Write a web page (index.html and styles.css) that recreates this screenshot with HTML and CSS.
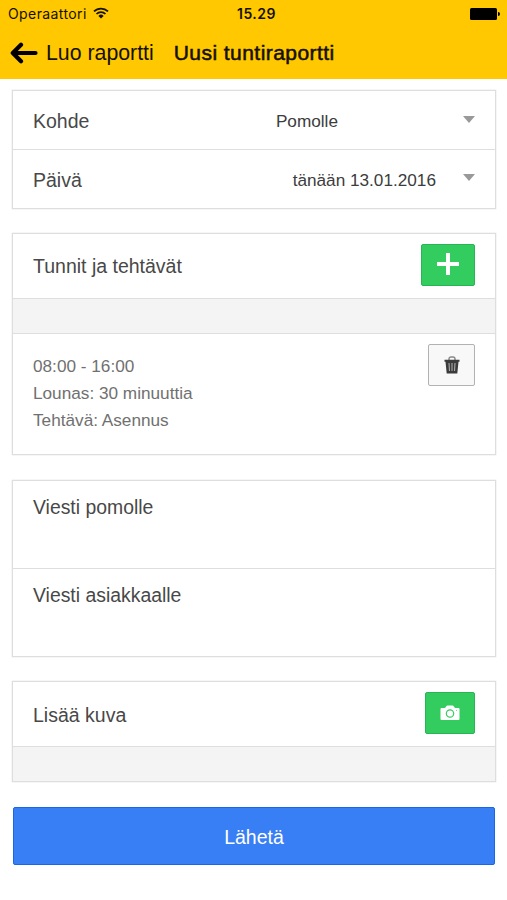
FILE: index.html
```html
<!DOCTYPE html>
<html lang="fi">
<head>
<meta charset="utf-8">
<meta name="viewport" content="width=device-width, initial-scale=1">
<title>Uusi tuntiraportti</title>
<link rel="stylesheet" href="styles.css">
</head>
<body>
<header class="top">
  <div class="status">
    <div class="carrier"><span>Operaattori</span>
      <svg class="wifi" width="16" height="12" viewBox="0 0 16 12" fill="none" stroke="#151000" stroke-width="1.7"><path d="M1 4.4a10 10 0 0 1 14 0M3.500 7a6.400 6.400 0 0 1 9 0"/><path d="M5.400 8.900a3.700 3.700 0 0 1 5.200 0L8 11.500z" fill="#151000" stroke="none"/></svg>
    </div>
    <div class="clock">15.29</div>
    <svg class="battery" width="30" height="12" viewBox="0 0 30 12"><rect width="27" height="12" rx="1.5"/><path d="M28 4a2 2 0 0 1 0 4z"/></svg>
  </div>
  <nav class="nav">
    <svg class="back" width="28" height="22" viewBox="0 0 28 22" fill="none" stroke="#000" stroke-width="4.2" stroke-linecap="round" stroke-linejoin="round"><path d="M25.500 11H3M11 2.800 2.800 11l8.200 8.200"/></svg>
    <a class="parent">Luo raportti</a>
    <h1 class="title">Uusi tuntiraportti</h1>
  </nav>
</header>
<main class="form">
  <section class="card">
    <div class="row select"><span>Kohde</span><span class="value target">Pomolle</span><i class="caret"></i></div>
    <div class="row select"><span>Päivä</span><span class="value date">tänään 13.01.2016</span><i class="caret"></i></div>
  </section>
  <section class="card">
    <div class="row action"><span>Tunnit ja tehtävät</span>
      <button class="btn add" aria-label="Lisää"><svg width="24" height="24" viewBox="0 0 24 24" stroke="#fff" stroke-width="4"><path d="M12 0v22M1 11h22"/></svg></button>
    </div>
    <div class="divider"></div>
    <div class="entry">
      <div class="details"><div>08:00 - 16:00</div><div>Lounas: 30 minuuttia</div><div>Tehtävä: Asennus</div></div>
      <button class="btn trash" aria-label="Poista"><svg width="16" height="18" viewBox="0 0 16 18" fill="none"><path d="M5 4V3a2 2 0 0 1 2-2h2a2 2 0 0 1 2 2v1" stroke="#888" stroke-width="1.4"/><path d="M.5 3.700h15v2h-1L13.300 17.500H2.700L1.500 5.700H.5z" fill="#3b3b3b"/><path d="M5 7l.5 8M8 7v8M11 7l-.5 8" stroke="#aaa" stroke-width="1.100"/></svg></button>
    </div>
  </section>
  <section class="card">
    <div class="message">Viesti pomolle</div>
    <div class="message">Viesti asiakkaalle</div>
  </section>
  <section class="card">
    <div class="row action photo"><span>Lisää kuva</span>
      <button class="btn camera" aria-label="Kamera"><svg width="20" height="16" viewBox="0 0 20 16"><path d="M1.500 3H5l1.500-2q.4-.5 1-.5h5q.6 0 1 .5L15 3h3.500Q19.500 3 19.500 4v10q0 1-1 1h-17q-1 0-1-1V4q0-1 1-1z" fill="#fff"/><circle cx="10" cy="8.500" r="3.700" fill="none" stroke="#35cd61" stroke-width="1.200"/><circle cx="16.500" cy="5.200" r=".5" fill="#35cd61"/></svg></button>
    </div>
    <div class="divider"></div>
  </section>
  <button class="submit">Lähetä</button>
</main>
</body>
</html>
```
FILE: styles.css
```css
* { box-sizing: border-box; }
body { margin: 0; background: #fff; color: #484848; font: 19.5px/24px "Liberation Sans", Arial, sans-serif; }
button { font: inherit; padding: 0; }
svg { display: block; flex: none; }
.top { height: 79px; background: #ffc800; color: #151000; }
.status { height: 27px; padding: 0 7px 0 8px; display: grid; grid-template-columns: 1fr auto 1fr; align-items: center; font: 14px/27px Inter, sans-serif; }
.carrier { display: flex; align-items: center; gap: 6px; letter-spacing: .4px; }
.wifi { margin-top: -2px; }
.clock { font-weight: 600; letter-spacing: .5px; padding-left: 5px; }
.battery { justify-self: end; fill: #000; }
.nav { height: 52px; display: flex; align-items: center; padding-left: 10px; font-size: 21.3px; }
.parent { margin-left: 8px; }
.title { margin: 0 0 0 20px; font-size: 21px; font-weight: 400; letter-spacing: .45px; -webkit-text-stroke: .55px #151000; }
.form { padding: 11px 11px 0 12px; display: flex; flex-direction: column; gap: 24px; }
.card { border: 1px solid #dedede; box-shadow: 0 0 0 .4px #e8e8e8; }
.row { display: flex; align-items: center; justify-content: space-between; padding: 0 20px; }
.select { height: 58px; padding-top: 2px; }
.select + .select { height: 59px; padding-top: 1px; border-top: 1px solid #dedede; }
.select .value { margin-left: auto; font-size: 17.2px; color: #3c3c3c; }
.target { margin-right: 125px; }
.date { margin-right: 27px; }
.caret { border: 6px solid transparent; border-top: 7px solid #999; border-bottom: 0; margin-top: -4px; }
.action { height: 64px; }
.photo > span { padding-top: 2px; }
.btn { display: flex; align-items: center; justify-content: center; height: 42px; border: 1px solid #2bb455; border-radius: 2px; background: #33cd5f; }
.add { width: 54px; margin-top: -2px; }
.camera { width: 50px; margin-top: -2px; }
.trash { width: 47px; background: #f8f8f8; border-color: #b2b2b2; }
.divider { height: 35px; background: #f4f4f4; border-top: 1px solid #dedede; }
.entry { height: 121px; border-top: 1px solid #dedede; padding: 10px 20px 0; display: flex; justify-content: space-between; }
.details { padding-top: 9px; font-size: 17.2px; line-height: 27px; color: #707070; }
.card:has(.message) { margin-top: 1px; }
.message { height: 87px; padding: 14px 20px; font-size: 19.4px; }
.message + .message { height: 88px; border-top: 1px solid #dedede; }
.submit { height: 58px; margin: 1px 1px 0; padding-top: 2px; border: 1px solid #1b66e6; border-radius: 2px; background: #387ef5; color: #fff; }
```
